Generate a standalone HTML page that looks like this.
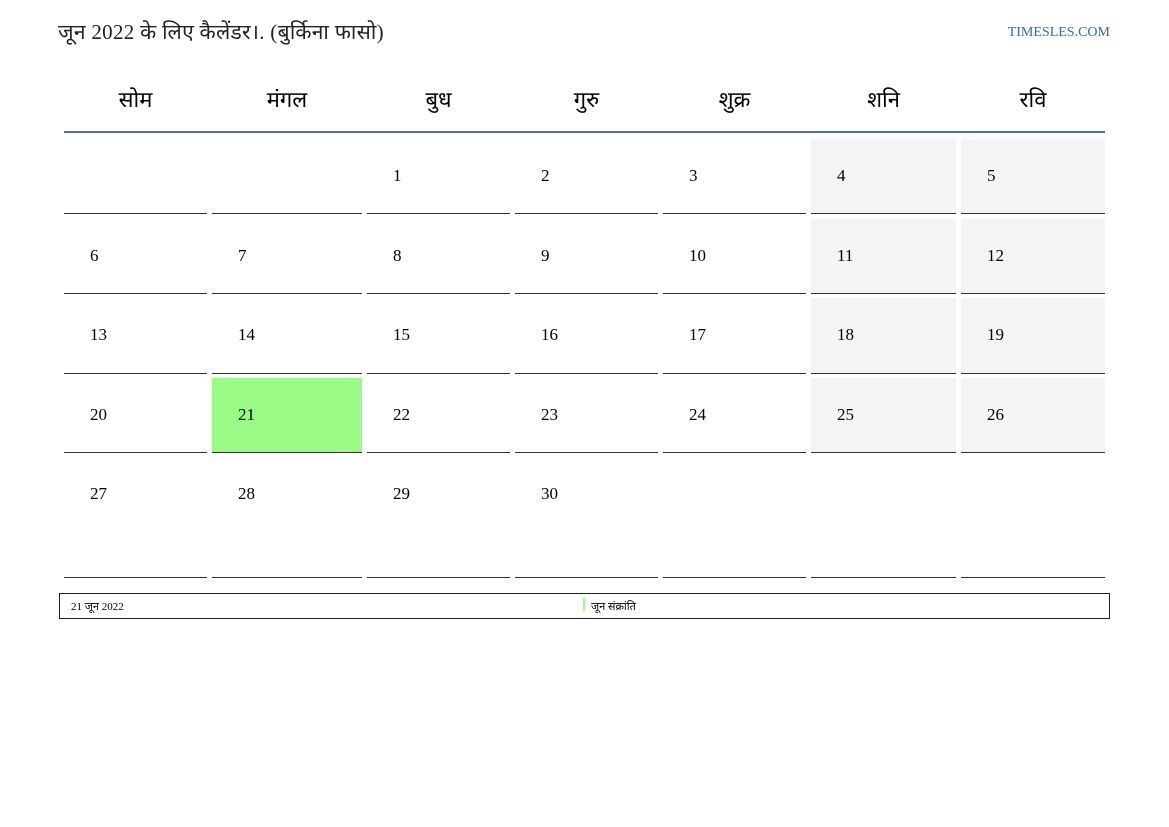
<!DOCTYPE html>
<html><head><meta charset="utf-8"><style>
body{margin:0;width:1169px;height:827px;background:#fff;font-family:"Liberation Serif",serif;color:#000;position:relative;overflow:hidden}
.a{position:absolute}
.t{left:58px;top:18px;font-size:21px;white-space:nowrap;letter-spacing:0.3px;color:#222}
.site{right:59px;top:25px;font-size:14px;color:#2a6db5}
.h{top:84px;font-size:22px;text-align:center}
.bl{left:64px;top:131px;width:1041px;height:2px;background:#4f6f9c}
.c{border-bottom:1px solid #333;box-sizing:border-box}
.c span{position:absolute;left:26px;font-size:17px}
.w{background:#f4f4f4}
.g{background:#99fa85}
.f{left:59px;top:593px;width:1051px;height:26px;border:1px solid #222;box-sizing:border-box;font-size:11px}
</style></head><body>
<div class="a t">जून 2022 के लिए कैलेंडर।. (बुर्किना फासो)</div>
<div class="a site">TIMESLES.COM</div>
<div id="cal"></div>
<div class="a bl"></div>
<div class="a f"><span class="a" style="left:11px;top:5px">21 जून 2022</span><span class="a" style="left:523px;top:4px;width:2px;height:13px;background:#99fa85"></span><span class="a" style="left:531px;top:5px">जून संक्रांति</span></div>
<script>
var xs=[[64,207],[212,362],[367,510],[515,658],[663,806],[811,956],[961,1105]];
var hd=["सोम","मंगल","बुध","गुरु","शुक्र","शनि","रवि"];
var rows=[[139,214],[219,294],[298,374],[378,453],[457,578]];
var h="";
for(var i=0;i<7;i++)h+='<div class="a h" style="left:'+xs[i][0]+'px;width:'+(xs[i][1]-xs[i][0])+'px">'+hd[i]+'</div>';
var d=-2;
for(var r=0;r<5;r++)for(var i=0;i<7;i++){d++;var n=(d>=1&&d<=30)?d:"";
var cls="a c"+(n&&i>=5?" w":"")+(d==21?" g":"");
h+='<div class="'+cls+'" style="left:'+xs[i][0]+'px;top:'+rows[r][0]+'px;width:'+(xs[i][1]-xs[i][0])+'px;height:'+(rows[r][1]-rows[r][0])+'px"><span style="top:27px">'+n+'</span></div>';}
document.getElementById("cal").innerHTML=h;
</script>
</body></html>
